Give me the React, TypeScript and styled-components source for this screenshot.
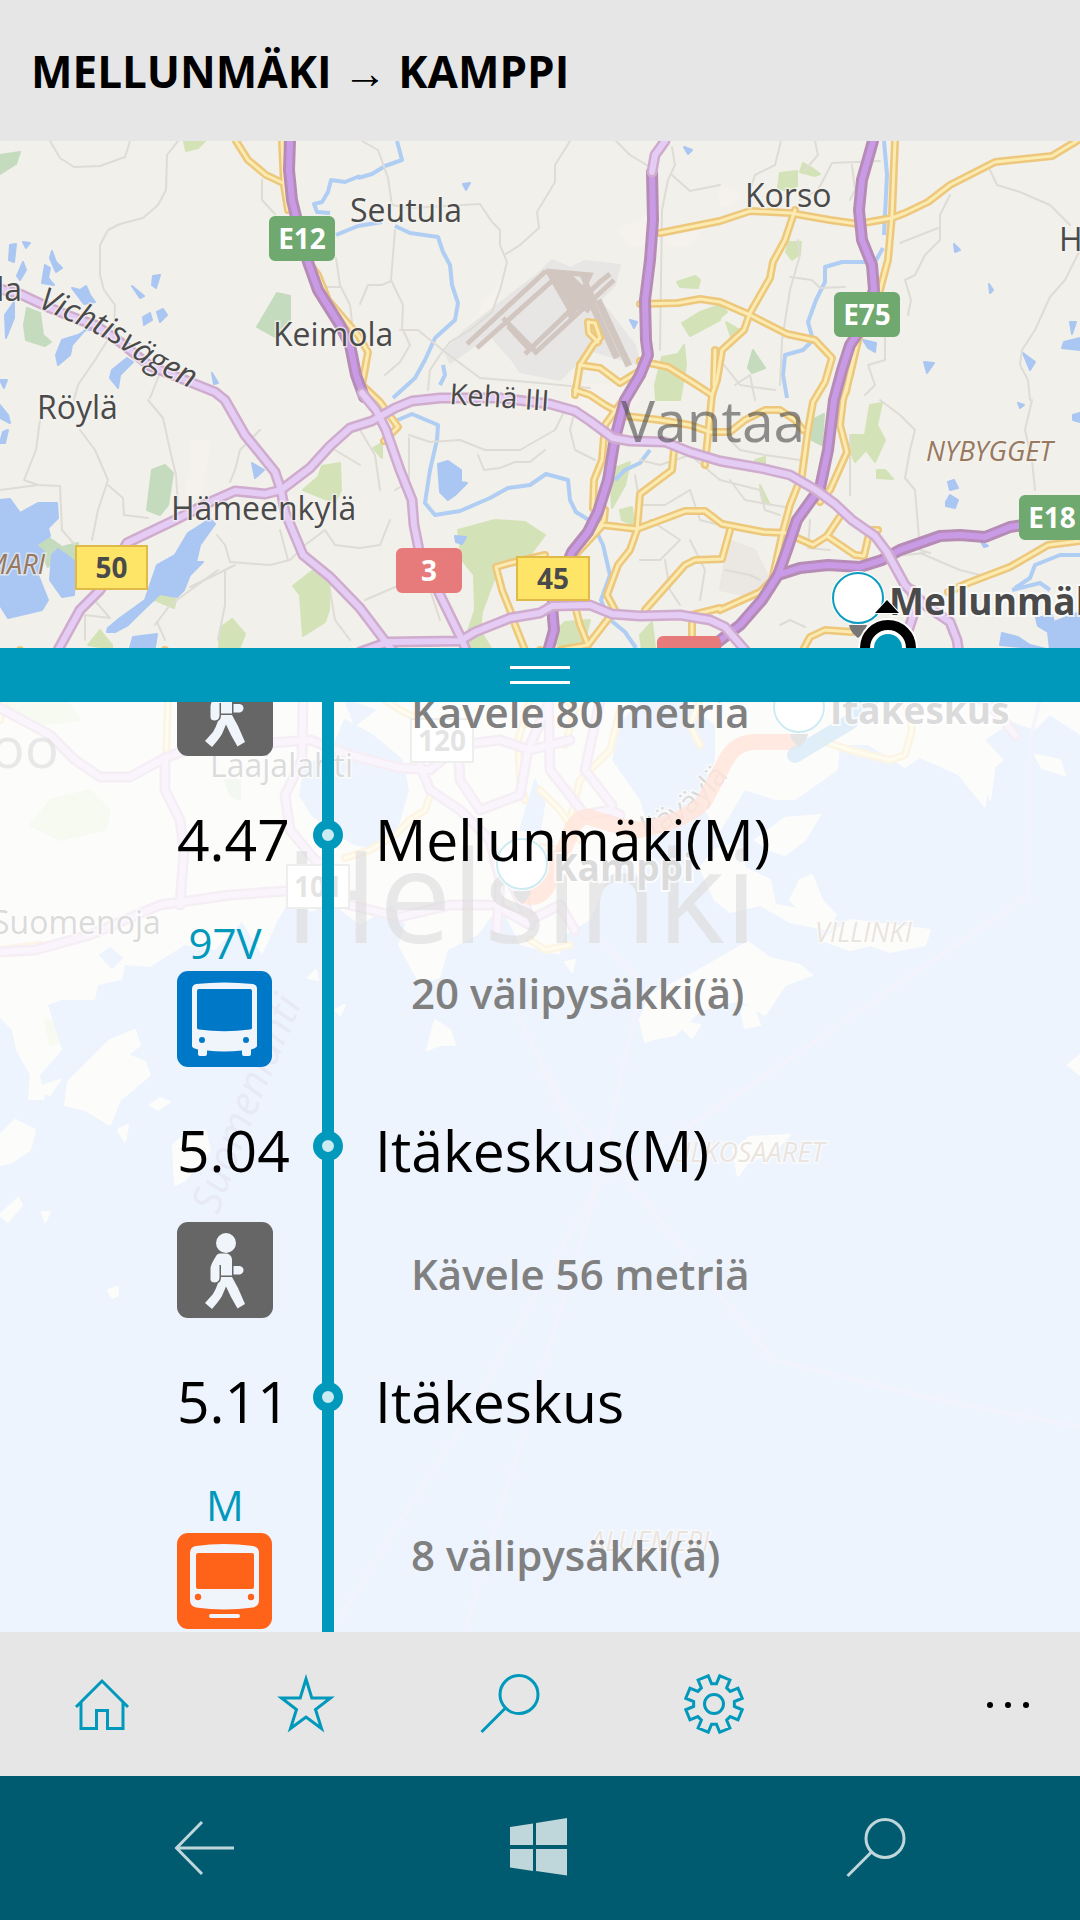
import React, { useLayoutEffect, useRef } from 'react';
import styled, { createGlobalStyle } from 'styled-components';

const FONT = '"Open Sans", "Noto Sans", sans-serif';
const ACCENT = '#0099bc';

const GlobalStyle = createGlobalStyle`
  *, *::before, *::after { box-sizing: border-box; }
  body { margin: 0; background: #e6e6e6; font-family: ${FONT}; }
`;

/* ---------- page frame ---------- */

const Page = styled.div`
  display: flex;
  flex-direction: column;
  height: 100vh;
  overflow: hidden;
`;

const Header = styled.header`
  flex: none;
  padding: 41px 31px 40px;
  background: #e6e6e6;
`;

const Title = styled.h1`
  margin: 0;
  font-size: 44px;
  line-height: 60px;
  font-weight: 700;
  color: #000;
  white-space: nowrap;
`;

const Arrow = styled.span`
  font-weight: 400;
`;

const Stage = styled.main`
  position: relative;
  flex: 1;
  min-height: 0;
  display: grid;
  grid-template-rows: minmax(0, 34fr) minmax(0, 66fr);
`;

const MapCanvas = styled.svg`
  position: absolute;
  inset: 0;
  width: 100%;
  height: 100%;
  display: block;
`;

const Sheet = styled.section`
  position: relative;
  grid-row: 2;
  display: flex;
  flex-direction: column;
  min-height: 0;
`;

const Handle = styled.button`
  flex: none;
  display: flex;
  flex-direction: column;
  align-items: center;
  justify-content: center;
  gap: 12px;
  height: 54px;
  padding: 0;
  border: 0;
  background: ${ACCENT};
`;

const Grip = styled.span`
  width: 60px;
  height: 3px;
  background: #fff;
`;

/* ---------- itinerary ---------- */

const Scroller = styled.div`
  flex: 1;
  min-height: 0;
  overflow-y: auto;
  scrollbar-width: none;
  background: rgba(255, 255, 255, 0.8);
`;

const Itinerary = styled.ol`
  margin: 0;
  padding: 0 0 0 177px;
  list-style: none;
`;

const Row = styled.li`
  display: grid;
  grid-template-columns: 96px 110px minmax(0, 1fr);
`;

const StopRow = styled(Row)`
  height: 80px;
  align-items: center;
`;

const LegRow = styled(Row)`
  align-items: center;
`;

const Rail = styled.span`
  align-self: stretch;
  justify-self: center;
  display: flex;
  align-items: center;
  justify-content: center;
  width: 12px;
  background: ${ACCENT};
`;

const StopDot = styled.span`
  flex: none;
  width: 30px;
  height: 30px;
  border: 9px solid ${ACCENT};
  border-radius: 50%;
  background: #cbebf2;
`;

const Time = styled.time`
  padding-top: 8px;
  font-size: 57px;
  line-height: 72px;
  white-space: nowrap;
  color: #000;
`;

const StopName = styled.span`
  padding-top: 8px;
  margin-left: -8px;
  font-size: 57px;
  line-height: 72px;
  white-space: nowrap;
  color: #000;
`;

const LegMode = styled.div`
  display: flex;
  flex-direction: column;
  align-items: center;
  padding: 36px 0 39px;
`;

const LineNumber = styled.span`
  padding-top: 4px;
  font-size: 42px;
  line-height: 56px;
  color: ${ACCENT};
`;

const ModeIcon = styled.svg`
  display: block;
  width: 96px;
  height: 96px;
`;

const LegText = styled.span`
  padding: 6px 0 0 28px;
  font-size: 42px;
  line-height: 60px;
  font-weight: 600;
  color: #808080;
  white-space: nowrap;
`;

/* ---------- bars ---------- */

const AppBar = styled.nav`
  flex: none;
  display: flex;
  height: 144px;
  background: #e6e6e6;
`;

const BarButton = styled.button<{ $end?: boolean }>`
  flex: 0 1 ${(p) => (p.$end ? '144px' : '204px')};
  margin-left: ${(p) => (p.$end ? 'auto' : '0')};
  display: flex;
  align-items: center;
  justify-content: center;
  padding: 0;
  border: 0;
  background: none;
  color: ${(p) => (p.$end ? '#000' : ACCENT)};
`;

const SystemBar = styled.nav`
  flex: none;
  display: flex;
  height: 144px;
  padding: 0 36px;
  background: #005a70;
`;

const SystemButton = styled.button`
  flex: 1;
  display: flex;
  align-items: center;
  justify-content: center;
  padding: 0;
  border: 0;
  background: none;
  color: #bfd6db;
`;

const Glyph = styled.svg`
  display: block;
  width: 60px;
  height: 60px;
  fill: none;
  stroke: currentColor;
  stroke-width: 3px;
`;

/* ---------- icons ---------- */

const CUT = '#f0f5fc';

function WalkIcon() {
  return (
    <ModeIcon viewBox="0 0 96 96" aria-label="Kävely">
      <rect width="96" height="96" rx="11" fill="#666" />
      <g fill={CUT}>
        <circle cx="49" cy="21" r="10" />
        <path d="M43 31.500L50 31.500Q55 33 55 38V53.500H44V43L42.500 43V56Q42 60 38 60.500Q33.500 60.500 33.500 57V46Q34 42 38.500 35Q40 31.500 43 31.500Z" />
        <path d="M56.500 44H63Q66.500 45 66.500 48Q66.500 51 63 52.500H56.500Z" />
        <path d="M44 55H55L61 66L68 82L60.500 86.500L54 75L49 64.500L45 74Q42 79 35 87L28 81L36 72Q39 67 41 61Q44 60 44 55Z" />
      </g>
      <path d="M43.500 43V53.500" stroke="#666" strokeWidth="1" />
    </ModeIcon>
  );
}

function BusIcon() {
  return (
    <ModeIcon viewBox="0 0 96 96" aria-label="Bussi">
      <rect width="95" height="96" rx="11" fill="#0078c8" />
      <path d="M15 18Q15 14 19 13Q47 10 76 13Q80 14 80 18V75Q80 77 74 78.500V83Q74 85 72 85H67Q65 85 65 83V79.500Q47 81.500 30 79.500V83Q30 85 28 85H23Q21 85 21 83V78.500Q15 77 15 75Z" fill={CUT} />
      <path d="M22 18H73Q75 18 75 20V57Q75 58 73 58.500Q47 62 22 58.500Q20 58 20 57V20Q20 18 22 18Z" fill="#0078c8" />
      <circle cx="25" cy="69" r="3" fill="#0078c8" />
      <circle cx="69" cy="69" r="3" fill="#0078c8" />
    </ModeIcon>
  );
}

function MetroIcon() {
  return (
    <ModeIcon viewBox="0 0 96 96" aria-label="Metro">
      <rect width="95" height="96" rx="11" fill="#ff6319" />
      <path d="M13 20Q13 14 19 13Q47 9 76 13Q82 14 82 20V67Q82 73 76 74.500Q47 78.500 19 74.500Q13 73 13 67Z" fill={CUT} />
      <rect x="19" y="20" width="58" height="36" rx="2" fill="#ff6319" />
      <circle cx="21" cy="64" r="3.200" fill="#ff6319" />
      <circle cx="74" cy="64" r="3.200" fill="#ff6319" />
      <rect x="32" y="81" width="31" height="4" rx="2" fill={CUT} />
    </ModeIcon>
  );
}

const HomeIcon = () => (
  <Glyph viewBox="0 0 60 60" aria-hidden="true">
    <path d="M4 33L30 7L56 33M9 28.500V54.500H24.500V36.500H35.500V54.500H51V28.500" />
  </Glyph>
);

const StarIcon = () => (
  <Glyph viewBox="0 0 60 60" aria-hidden="true">
    <path d="M30 5L35.800 24H54.500L39.500 35.500L45.500 54.500L30 43L14.500 54.500L20.500 35.500L5.500 24H24.200Z" />
  </Glyph>
);

const SearchIcon = () => (
  <Glyph viewBox="0 0 60 60" aria-hidden="true">
    <circle cx="39" cy="20.500" r="19" />
    <path d="M25.500 34L1.500 58" />
  </Glyph>
);

const gearPoints = Array.from({ length: 8 }, (_, k) =>
  [[-11.5, 28.8], [-7, 20.5], [7, 20.5], [11.5, 28.8]].map(([offset, r]) => {
    const a = ((k * 45 + offset) * Math.PI) / 180;
    return `${(30 + r * Math.sin(a)).toFixed(2)},${(30 - r * Math.cos(a)).toFixed(2)}`;
  }).join(' '),
).join(' ');

const GearIcon = () => (
  <Glyph viewBox="0 0 60 60" aria-hidden="true">
    <polygon points={gearPoints} />
    <circle cx="30" cy="30" r="9.500" />
  </Glyph>
);

const MoreIcon = () => (
  <Glyph viewBox="0 0 60 60" aria-hidden="true">
    <g fill="currentColor" stroke="none">
      <circle cx="12" cy="31" r="3" />
      <circle cx="30" cy="31" r="3" />
      <circle cx="48" cy="31" r="3" />
    </g>
  </Glyph>
);

const BackIcon = () => (
  <Glyph viewBox="0 0 60 60" aria-hidden="true">
    <path d="M28 4L2.500 30L28 56M2 30H60" />
  </Glyph>
);

const WindowsIcon = () => (
  <Glyph viewBox="0 0 60 60" aria-hidden="true">
    <path d="M0 9L23 5.500V27H0ZM26 5L57 0V27H26ZM0 31H23V53L0 49.500ZM26 31H57V57.500L26 53Z" fill="currentColor" stroke="none" />
  </Glyph>
);

/* ---------- map ---------- */

type RoadKind = 'minor' | 'local' | 'regional' | 'motorway';

const roadStyle: Record<RoadKind, { casing: string; core: string; outer: number; inner: number }> = {
  minor: { casing: '#dedcd5', core: '#dedcd5', outer: 2, inner: 0 },
  local: { casing: '#edc87c', core: '#fbebb0', outer: 8, inner: 3 },
  regional: { casing: '#cfaccd', core: '#e5ccf5', outer: 11, inner: 6 },
  motorway: { casing: '#b68cb6', core: '#c99be6', outer: 12, inner: 6 },
};

const minorRoads = [
  '50,141 60,158 74,167 100,166 125,157 130,141',
  '178,141 167,155 166,190 158,205 143,218 120,224 108,230 100,245 100,275 104,290 115,305 114,330 95,360 78,385 74,400',
  '262,180 262,200 275,214', '336,258 340,285 350,305 352,322',
  '340,287 325,287', '160,373 150,398', '148,400 163,418 170,450 176,475 178,505',
  '40,420 36,450 24,480 38,485 60,486 62,530 75,545', '80,430 95,450 108,480 98,510 92,540',
  '108,485 123,498 124,515 148,518', '0,490 38,485',
  '362,141 378,150 388,178 392,205 410,208 480,204 492,222 500,230 500,245 507,262 500,290 492,312 470,330 450,342 440,355 430,370 428,390',
  '570,141 555,165 555,182 537,212 539,228 520,245 506,254', '616,141 630,155 650,167',
  '395,230 391,280 403,305 402,328 410,345 400,362 385,375', '400,330 418,330 445,352 480,378 540,383 590,388',
  '360,304 368,285 382,285 391,281', '672,147 675,165 668,180 662,210 660,350',
  '672,175 690,191 720,185', '781,141 775,165 755,175 750,190',
  '815,141 818,155 805,170', '800,200 818,190 832,163 880,161', '852,165 855,190 850,200',
  '798,240 800,255 790,290 782,340 780,385', '790,277 812,280 820,288 845,287',
  '990,170 997,185 1020,192 1050,205 1070,225', '950,195 940,215 940,240 925,255 915,275 905,280 911,300 908,315',
  '900,243 938,228', '1080,250 1065,280 1050,297 1035,330 1022,350 1020,365 1028,380 1030,400',
  '885,335 885,360 868,365 875,385 865,395', '260,430 240,450 235,470 230,482',
  '217,535 225,545 230,562 270,565 290,560 305,545 325,530 335,545 360,548', '280,530 288,560',
  '190,587 215,575 235,565', '155,625 170,605 218,570', '157,622 165,640', '225,570 225,605 218,640',
  '90,595 110,618 85,615 85,640', '330,590 335,620 350,640', '360,465 335,450',
  '409,438 409,482 395,490', '409,435 430,442 460,440 485,450 520,450 555,430 565,410',
  '478,455 484,470 500,468 515,462 530,462 545,450', '360,430 375,455 380,490',
  '360,548 380,545 390,520', '365,600 400,585 420,575', '430,590 440,620',
  '575,410 570,430 575,450 595,460', '640,460 660,465 690,455', '635,475 640,505 665,505 690,490',
  '690,455 720,480 760,490', '690,490 700,520 720,525', '665,560 670,590 680,605', '690,540 705,570 700,600',
  '650,520 680,540 660,560 640,560', '730,440 740,450 765,455 800,460', '760,490 765,510 780,515',
  '730,480 745,500 790,508', '720,360 740,385 775,390', '735,385 750,375 755,400',
  '850,435 850,495', '880,400 900,415 915,430 910,450 905,478', '905,478 915,490 920,550 930,553',
  '1032,400 1025,430 1032,460 1035,490', '780,625 790,620 805,627', '920,553 960,570 980,575',
  '810,520 808,548 830,550', '875,558 925,553', '725,570 750,575 760,580',
];

const localRoads = [
  '236,141 248,160 266,175 283,183', '282,141 284,185 288,210',
  '305,258 318,275 328,300 345,320 358,335 368,352 362,385 380,402 398,427 384,441',
  '895,141 892,215 888,260 880,290 858,340 850,375 843,400 840,425 847,452 830,490 820,502',
  '858,340 850,372 846,392',
  '660,233 690,227 720,221 750,211 790,213 830,220 858,224 892,218 905,213 928,202 950,185 995,162 1052,156 1080,139',
  '795,210 785,240 773,262 770,278 750,313 744,330 722,350 717,380 712,395 708,435 705,465',
  '640,304 678,303 700,299 720,302 750,315 787,334 815,340 832,358 825,382 813,402 808,430 802,475 790,505 782,535 772,580 760,592 720,610',
  '640,361 668,367 692,382 712,395', '715,350 714,385',
  '575,395 580,365 593,345 600,338 595,323 588,322 589,333 598,342',
  '580,365 600,368 620,383 638,372', '575,390 590,395 605,405 625,416 660,420 690,425 710,432 730,432 745,420 765,410 780,410 795,420 803,430',
  '623,400 605,425 602,460 594,480 593,508',
  '587,540 604,520 605,510', '578,552 603,525 637,529 685,511 705,511 722,524 764,532 786,533 813,545 827,536 855,555 864,556 870,530 878,530',
  '674,450 672,470 640,494 637,530 630,550 618,565 607,595 615,610 588,645 560,650', '576,610 580,625 588,645',
  '645,610 685,565 695,560 722,559 730,530', '827,536 843,512',
  '545,555 510,563 496,567 502,590 510,610 515,625 525,650', '692,650 692,615 720,608',
  '948,592 968,583 1010,567 1048,545 1080,541', '803,650 810,637 825,630 852,632',
  '540,650 545,670 560,690 575,710 565,745', '165,650 168,700 166,760', '0,720 20,650',
  '370,690 400,710 420,720', '432,790 425,810 410,820 395,835 370,850 345,858', '520,660 530,700 518,740 520,780 525,800',
  '700,700 690,725 700,745', '820,740 850,750 890,760 905,755 912,730 905,700',
  '540,790 560,810 580,840', '0,950 40,945', '570,820 580,780 610,750 620,710',
  '530,940 545,950 570,945', '560,850 530,845 510,850',
];

const regionalRoads = [
  '0,289 20,294 50,308 80,320 95,325 120,342 150,366 190,382 215,392 225,400 245,435 275,472 281,490 285,512 303,555 330,577 360,608 388,645 410,670',
  '58,650 80,610 100,590 127,543 175,520 210,502 235,491 265,494 281,490 310,468 330,446 350,428 372,421 395,408 412,401 440,398 500,398 550,404 575,411 590,421 613,438 630,441 665,442 690,452 720,461 760,468 790,475 816,490 835,504 852,520 875,536 887,552 905,585 925,605 950,622 957,640 960,660',
  '362,393 376,410 386,430 400,470 412,500 414,525 419,550 440,595 462,640 470,660',
  '360,652 388,642 460,641 475,632 510,618 540,613 552,606 590,605 612,614 640,616 680,615 710,620 725,627 745,650 760,680',
  '665,141 655,155 652,172', '912,590 915,610 905,640 895,690',
  '0,708 50,735 75,760 100,777 130,777 165,758 200,745 270,743 310,740 350,755 400,768 430,770 460,745 500,740 530,750 570,740',
  '165,758 165,790 180,820 184,850 180,905', '303,700 302,760 285,795 290,830 315,860 345,875',
  '0,952 35,950 90,935 160,905 230,895 300,890 350,905 400,917 450,905 490,905',
  '420,765 430,790 460,810 490,840 500,880 497,930', '458,745 460,780 480,810 520,795 528,750 550,700',
  '548,680 550,770 585,815 610,810 620,815', '600,700 585,770 612,805', '960,680 1000,715 1015,735',
  '500,860 530,920 560,905 575,930', '495,905 530,925 520,880',
];

const motorways = [
  '290,141 289,170 292,200 298,225 308,262 318,290 340,325 350,345 356,375 364,397',
  '652,172 653,220 650,260 645,300 646,340 648,355 640,375 625,400 615,438 608,480 598,512 588,532 572,552 560,580 552,606 554,630 547,655',
  '873,141 862,180 859,210 862,240 872,265 874,290 860,330 850,345 842,370 834,400 828,450 820,488 797,520 787,550 778,575 762,600 740,625 718,642',
  '778,575 800,568 828,565 860,567 882,560 900,550 940,536 960,535 985,537 1010,527 1050,521 1080,518',
];

function Roads({ kind, lines }: { kind: RoadKind; lines: string[] }) {
  const s = roadStyle[kind];
  return (
    <g fill="none" strokeLinejoin="round" strokeLinecap="round">
      {lines.map((p) => <polyline key={p} points={p} stroke={s.casing} strokeWidth={s.outer} />)}
      {s.inner > 0 && lines.map((p) => <polyline key={p} points={p} stroke={s.core} strokeWidth={s.inner} />)}
    </g>
  );
}

const parks = [
  '184,141 205,141 198,148 186,151', '780,173 797,171 797,186 790,192 778,188', '803,163 812,168 820,174 815,176 800,172',
  '789,242 801,242 800,254 792,260 786,252', '677,282 695,276 700,280 698,288 680,287',
  '682,323 700,312 720,305 720,320 690,336', '655,385 662,357 678,354 684,345 686,365 680,400 656,400',
  '303,490 318,477 322,466 340,463 341,490 335,503', '293,586 312,571 330,572 329,610 325,622 303,636 300,595',
  '220,628 232,619 245,634 240,647 219,648', '155,600 167,592 176,600 174,608', '88,645 100,630 112,645 112,649',
  '373,448 382,443 382,458', '458,530 495,520 525,522 545,535 530,555 500,565 490,590 482,612 480,630 492,650 468,650 465,640 475,610 474,575 462,560',
  '548,640 565,622 590,620 585,640 560,646', '610,470 630,462 625,485 612,508', '620,510 632,507 634,525 622,520',
  '850,435 865,435 870,405 882,403 877,425 885,440 875,462 866,450 855,462 850,450', '877,470 885,470 893,479 877,478',
  '755,460 765,457 765,466 754,467', '760,485 770,505 762,500', '640,635 652,622 655,648 642,650',
  '720,305 727,312 720,318', '726,322 740,330 732,340', '50,800 90,790 110,810 105,830 60,840 30,825',
  '690,860 705,870 720,890 730,905 710,915 700,880', '870,790 890,770 900,790 860,815', '905,820 940,795 925,810 945,835 925,830',
  '0,680 60,690 80,720 40,725 0,705', '680,750 705,740 700,770', '655,790 680,780 690,800',
  '45,1020 70,1020 70,1040 50,1045',
];

const forests = [
  '0,155 20,152 16,164 0,174', '277,293 290,296 290,322 275,337 257,327 270,305', '27,308 40,313 43,335 51,342 45,346 26,340 24,325',
  '152,470 165,465 173,473 168,505 160,515 147,510', '38,545 48,537 62,547 78,543 76,562 52,560 48,567',
  '750,360 753,350 765,368 752,373 748,368', '812,420 824,414 822,445 812,440', '225,780 240,780 240,800 230,795',
];

const lakes = [
  '0,500 10,499 20,513 38,503 57,503 58,518 48,528 50,536 36,545 44,552 38,575 48,600 42,610 8,618 0,605',
  '52,555 58,549 68,556 75,562 74,595 62,597 50,580', '0,405 8,415 10,423 0,418', '3,432 8,430 5,443 0,443',
  '210,519 215,524 200,545 196,562 203,562 190,575 184,590 177,597 160,594 138,615 128,625 115,632 107,632 108,628 120,618 145,600 157,565 175,555 188,533',
  '133,637 157,634 155,647 130,648', '438,464 448,461 461,470 461,482 467,483 460,490 455,495 448,500 440,492', '252,463 264,470 255,478',
  '455,536 466,537 462,544 456,542', '10,245 16,244 14,262 9,260', '23,262 26,270 20,280 17,276', '52,251 56,262 62,268 56,272 50,258',
  '45,265 50,268 48,278 54,285 42,283', '72,288 80,290 86,286 90,295 95,302 84,304', '132,286 144,296 140,298', '153,276 160,275 156,288 152,285',
  '143,317 150,313 152,320 144,325', '157,312 163,309 167,315 160,322', '5,315 14,302 14,318 6,338', '95,325 100,330 85,330 72,345 70,355 58,365 56,355 62,340 78,335',
  '127,358 133,362 120,375 118,388 110,378 112,370', '212,373 218,383 214,384', '0,380 7,380 4,388', '23,242 30,243 26,248',
  '1036,618 1052,615 1054,622 1080,612 1080,655 1050,650 1048,632 1038,626', '1002,633 1018,637 1030,645 1050,650 1000,645',
  '948,482 954,480 958,488 950,490', '946,502 950,495 958,500 955,508 946,506', '1073,415 1080,413 1080,422 1073,420',
  '1023,353 1035,362 1030,370', '1064,342 1080,338 1080,350 1062,348', '863,340 876,343 875,352 868,348', '924,362 934,363 927,373',
  '954,244 960,250 955,252', '989,284 993,290 990,293', '1070,322 1076,322 1072,334', '463,184 470,183 466,190', '684,147 692,150 688,154',
  '980,540 988,546 984,547', '1018,403 1024,405 1020,408', '630,320 637,322 634,328',
];

const streams = [
  '360,176 345,182 331,180 328,192 322,202 314,204 317,212 330,213', '336,235 358,226 382,222',
  '397,141 402,160 385,166 372,174 358,178', '395,226 410,233 438,237 443,252 450,265 452,285 458,303 455,320 435,338 425,360 415,378 393,398',
  '393,422 412,414 438,425 437,440 430,470 425,503 435,515 460,511 490,498 508,488 530,485 546,474 568,480 570,500 576,512 592,522 603,545 610,575 601,600 608,618 625,632 636,648',
  '883,248 875,262 842,262 825,267 825,282 816,300 808,322 813,340 803,350 785,355 783,375 787,398',
  '884,141 887,175 884,235', '650,450 640,463 625,470 615,480', '1015,588 1030,578 1035,565 1060,555 1080,555', '1012,590 1040,583 1050,590', '440,385 445,375 443,365',
];

const sea =
  '0,1018 12,1030 16,1050 30,1075 28,1100 45,1100 40,1075 62,1050 48,1005 62,1000 95,1000 98,985 122,980 125,965 150,967 185,945 215,950 242,922 262,955 278,920 290,900 312,912 330,902 360,925 392,905 405,925 398,945 420,985 440,978 448,950 478,935 500,905 520,945 560,955 565,935 590,920 605,885 620,865 640,875 652,840 640,800 612,760 620,722 640,702 685,702 715,725 715,760 700,800 718,835 745,790 775,800 795,800 838,770 840,745 868,745 905,768 920,758 958,775 985,808 992,770 1004,760 985,740 1012,722 1035,730 1050,715 1080,735 1080,1632 0,1632';

const bays = ['300,795 305,765 330,755 345,720 372,735 402,760 408,790 395,835 375,850 350,842 312,815', '345,700 375,710 355,725', '535,780 545,800 540,830 520,830', '100,955 110,948 122,958 112,968'];

const islands = [
  '700,868 715,850 738,842 745,868 770,880 775,905 835,915 830,930 790,922 760,905 730,912 715,900',
  '690,975 748,942 770,958 800,965 812,975 785,985 765,1015 740,1000 700,1010 675,1035 648,1040 640,1020 650,995',
  '755,840 785,818 820,815 805,840 785,855 770,850', '790,900 800,880 812,875 822,900 836,915 815,925',
  '822,940 850,920 890,925 930,930 925,945 890,952 870,945 850,950', '640,1020 670,1020 665,1035 645,1042',
  '68,1082 110,1040 135,1030 140,1045 128,1055 145,1062 150,1075 120,1100 110,1125 85,1110 65,1105', '30,1090 60,1080 50,1095',
  '0,1135 15,1120 35,1130 30,1150 12,1162 0,1165', '0,1215 18,1198 22,1205 8,1222', '150,1105 160,1098 170,1102 158,1110',
  '118,1130 128,1125 125,1142', '173,1145 185,1135 205,1130 210,1150 185,1180 175,1185', '42,1212 50,1212 45,1222', '108,1290 118,1287 118,1295 112,1298',
  '427,1050 435,1020 450,1030 455,1045 440,1045', '733,1150 750,1137 790,1135 770,1155 750,1160 738,1176', '1068,1065 1080,1055 1080,1075',
  '740,1005 755,1010 760,1025 745,1028', '675,1020 700,1025 692,1038', '308,978 316,970 318,980', '335,1010 345,1005 340,1015', '565,962 575,960 572,972',
  '1035,755 1060,760 1065,775 1042,768', '1060,702 1080,715 1080,725', '985,760 995,762 990,800',
];

const ferryLines = [
  '1040,700 1030,740 1029,895 722,1105 598,1184 465,1420 338,1620', '540,1065 598,1184', '515,1010 560,1100 615,1165 773,1360 930,1398 1080,1427',
  '592,930 642,982 620,1080 598,1184 540,1378 465,1630',
];

const towns: [string, number, number][] = [
  ['Seutula', 350, 222], ['Korso', 745, 207], ['Keimola', 273, 346], ['Röylä', 37, 419], ['Hämeenkylä', 171, 520],
  ['Laajalahti', 210, 777], ['Suomenoja', -8, 934],
];

function Shield({ x, y, w, text, bg, edge, fg = '#fff', rx = 5 }: {
  x: number; y: number; w: number; text: string; bg: string; edge: string; fg?: string; rx?: number;
}) {
  return (
    <g>
      <rect x={x} y={y} width={w} height="43" rx={rx} fill={bg} stroke={edge} strokeWidth="2" />
      <text x={x + w / 2} y={y + 32} textAnchor="middle" fontSize="28" fontWeight="700" fill={fg}>{text}</text>
    </g>
  );
}

function StopPin({ x, y, name }: { x: number; y: number; name: string }) {
  return (
    <g>
      <path d={`M${x - 9} ${y + 27}Q${x - 8} ${y + 34} ${x} ${y + 40}Q${x + 8} ${y + 34} ${x + 9} ${y + 27}Z`} fill="#777" />
      <circle cx={x} cy={y} r="27" fill="#fff" />
      <circle cx={x} cy={y} r="25" fill="#fff" stroke="#0a9dbf" strokeWidth="2" />
      <text x={x + 31} y={y + 17} fontSize="37" fontWeight="700" fill="#4a4a4a" stroke="#fff" strokeWidth="4" strokeOpacity="0.7" paintOrder="stroke">{name}</text>
    </g>
  );
}

function RegionMap() {
  const poly = (list: string[], fill: string) => list.map((p) => <polygon key={p} points={p} fill={fill} stroke={fill} strokeWidth="2" strokeLinejoin="round" />);
  return (
    <MapCanvas viewBox="0 141 1080 1491" preserveAspectRatio="xMidYMin slice" role="img" aria-label="Kartta" fontFamily={FONT}>
      <rect y="141" width="1080" height="1491" fill="#f1f0eb" />
      {poly(['190,442 210,440 205,470 200,495 185,495 190,470', '570,385 620,385 640,400 600,425 570,410', '618,230 650,215 650,245 630,245', '665,235 700,230 690,245 668,245', '500,280 498,300 480,330 470,325', '720,185 740,195 730,205 720,205'], '#f5f1ed')}
      {poly(['728,540 755,550 775,590 765,600 720,590'], '#ebe7e2')}
      {poly(parks, '#d3e3b7')}
      {poly(forests, '#c5dbbd')}
      {poly(['540,272 552,260 570,268 585,261 620,265 615,285 600,300 635,345 640,365 590,350 560,380 520,372 512,360 490,335 450,363 445,352 465,330'], '#e7e6e4')}
      <g stroke="#d2c6c1" fill="none" strokeWidth="5">
        <path d="M467 344L546 271M477 348L552 281M508 326L530 350M525 354L600 282L610 274M534 354L614 280M503 318L536 352M582 275L594 300L586 312" />
        <path d="M590 300L617 358M598 300L629 366" strokeWidth="7" />
        <path d="M546 271L590 275L570 318" />
      </g>
      <polygon points="546,273 570,273 596,298 570,315" fill="#d2c6c1" />
      <polygon points={sea} fill="#aac6f2" />
      {poly(bays, '#aac6f2')}
      {poly(islands, '#f1f0eb')}
      {poly(lakes, '#aac6f2')}
      <g fill="none" stroke="#b0cdf3" strokeWidth="4" strokeLinejoin="round">
        {streams.map((p) => <polyline key={p} points={p} />)}
      </g>
      <g fill="none" stroke="#c6bfec" strokeOpacity="0.7" strokeWidth="4">
        {ferryLines.map((p) => <polyline key={p} points={p} />)}
      </g>
      <Roads kind="minor" lines={minorRoads} />
      <Roads kind="local" lines={localRoads} />
      <Roads kind="motorway" lines={motorways} />
      <Roads kind="regional" lines={regionalRoads} />

      <g fill="#4a4a4a" fillOpacity="0.6">
        <text x="621" y="442" fontSize="57">Vantaa</text>
        <text x="59" y="768" fontSize="57" textAnchor="end">Espoo</text>
        <text x="284" y="943" fontSize="129">Helsinki</text>
      </g>
      <g fontSize="32" fontWeight="500" fill="#4a4a4a" stroke="#f5f4f0" strokeWidth="3" strokeOpacity="0.7" paintOrder="stroke">
        {towns.map(([name, x, y]) => <text key={name} x={x} y={y}>{name}</text>)}
        <text x="1059" y="251">H</text>
        <text x="22" y="301" textAnchor="end">la</text>
        <text x="449" y="404" fontSize="29" transform="rotate(4 449 404)">Kehä III</text>
        <path id="vichtis" d="M37 307Q85 327 115 344Q155 376 215 398" fill="none" stroke="none" />
        <text fontStyle="italic" fontSize="32"><textPath href="#vichtis">Vichtisvägen</textPath></text>
        <path id="itavayla" d="M644 838Q698 822 742 758" fill="none" stroke="none" />
        <text fontSize="30"><textPath href="#itavayla">Itäväylä</textPath></text>
      </g>
      <path id="gulf" d="M218 1215Q250 1120 308 990" fill="none" />
      <text fontStyle="italic" fontSize="41" fill="#8791d4"><textPath href="#gulf">Suomenlahti</textPath></text>
      <g fontStyle="italic" fontSize="27" fill="#98785f" stroke="#f5f4f0" strokeWidth="3" strokeOpacity="0.6" paintOrder="stroke">
        <text x="926" y="461">NYBYGGET</text>
        <text x="45" y="574" textAnchor="end">MARI</text>
        <text x="815" y="942">VILLINKI</text>
        <text x="672" y="1162">ULKOSAARET</text>
        <text x="590" y="1551">ALUEMERI</text>
      </g>

      <Shield x={270} y={217} w={64} text="E12" bg="#6fa96f" edge="#6fa96f" />
      <Shield x={835} y={293} w={64} text="E75" bg="#6fa96f" edge="#6fa96f" />
      <Shield x={1020} y={496} w={64} text="E18" bg="#6fa96f" edge="#6fa96f" />
      <Shield x={76} y={546} w={71} text="50" bg="#ffe567" edge="#dfba48" fg="#4a4a4a" rx={0} />
      <Shield x={517} y={557} w={72} text="45" bg="#ffe567" edge="#dfba48" fg="#4a4a4a" rx={0} />
      <Shield x={397} y={549} w={64} text="3" bg="#e77b7b" edge="#e77b7b" />
      <Shield x={658} y={637} w={62} text="4" bg="#e77b7b" edge="#e77b7b" />
      <Shield x={411} y={719} w={62} text="120" bg="#fff" edge="#aaa" fg="#777" rx={0} />
      <Shield x={287} y={865} w={62} text="101" bg="#fff" edge="#aaa" fg="#777" rx={0} />

      <g fill="none" strokeWidth="16" strokeLinecap="round" strokeLinejoin="round" strokeOpacity="0.8">
        <path d="M795 742H755Q735 742 725 762L705 800Q690 820 640 830Q610 825 590 817Q575 815 568 840L548 885Q540 900 524 896" stroke="#ff7a45" />
        <path d="M795 755L850 722L888 680" stroke="#3f9bd8" />
      </g>
      <StopPin x={799} y={707} name="Itäkeskus" />
      <StopPin x={522} y={864} name="Kamppi" />
      <StopPin x={858} y={598} name="Mellunmäki" />
      <path d="M887 600L875 613H899Z" fill="#000" stroke="#fff" strokeWidth="2" paintOrder="stroke" />
      <circle cx="888" cy="648" r="30" fill="#fff" />
      <circle cx="888" cy="648" r="23" fill="#fff" stroke="#000" strokeWidth="10" />
      <circle cx="888" cy="648" r="14" fill={ACCENT} />
    </MapCanvas>
  );
}

/* ---------- data and page ---------- */

type Mode = 'walk' | 'bus' | 'metro';
type Step =
  | { kind: 'stop'; time: string; name: string }
  | { kind: 'leg'; mode: Mode; line?: string; text: string };

const steps: Step[] = [
  { kind: 'leg', mode: 'walk', text: 'Kävele 80 metriä' },
  { kind: 'stop', time: '4.47', name: 'Mellunmäki(M)' },
  { kind: 'leg', mode: 'bus', line: '97V', text: '20 välipysäkki(ä)' },
  { kind: 'stop', time: '5.04', name: 'Itäkeskus(M)' },
  { kind: 'leg', mode: 'walk', text: 'Kävele 56 metriä' },
  { kind: 'stop', time: '5.11', name: 'Itäkeskus' },
  { kind: 'leg', mode: 'metro', line: 'M', text: '8 välipysäkki(ä)' },
];

const modeIcons = { walk: WalkIcon, bus: BusIcon, metro: MetroIcon };

function StepRow({ step }: { step: Step }) {
  if (step.kind === 'stop') {
    return (
      <StopRow>
        <Time>{step.time}</Time>
        <Rail><StopDot /></Rail>
        <StopName>{step.name}</StopName>
      </StopRow>
    );
  }
  const Icon = modeIcons[step.mode];
  return (
    <LegRow>
      <LegMode>
        {step.line && <LineNumber>{step.line}</LineNumber>}
        <Icon />
      </LegMode>
      <Rail />
      <LegText>{step.text}</LegText>
    </LegRow>
  );
}

export default function App() {
  const scroller = useRef<HTMLDivElement>(null);

  useLayoutEffect(() => {
    if (scroller.current) scroller.current.scrollTop = 78;
  }, []);

  return (
    <>
      <GlobalStyle />
      <Page>
        <Header><Title>MELLUNMÄKI <Arrow>→</Arrow> KAMPPI</Title></Header>
        <Stage>
          <RegionMap />
          <Sheet>
            <Handle aria-label="Muuta paneelin kokoa"><Grip /><Grip /></Handle>
            <Scroller ref={scroller}>
              <Itinerary>
                {steps.map((step, i) => <StepRow key={i} step={step} />)}
              </Itinerary>
            </Scroller>
          </Sheet>
        </Stage>
        <AppBar>
          <BarButton aria-label="Etusivu"><HomeIcon /></BarButton>
          <BarButton aria-label="Suosikit"><StarIcon /></BarButton>
          <BarButton aria-label="Haku"><SearchIcon /></BarButton>
          <BarButton aria-label="Asetukset"><GearIcon /></BarButton>
          <BarButton $end aria-label="Lisää"><MoreIcon /></BarButton>
        </AppBar>
        <SystemBar>
          <SystemButton aria-label="Takaisin"><BackIcon /></SystemButton>
          <SystemButton aria-label="Aloitus"><WindowsIcon /></SystemButton>
          <SystemButton aria-label="Etsi"><SearchIcon /></SystemButton>
        </SystemBar>
      </Page>
    </>
  );
}
